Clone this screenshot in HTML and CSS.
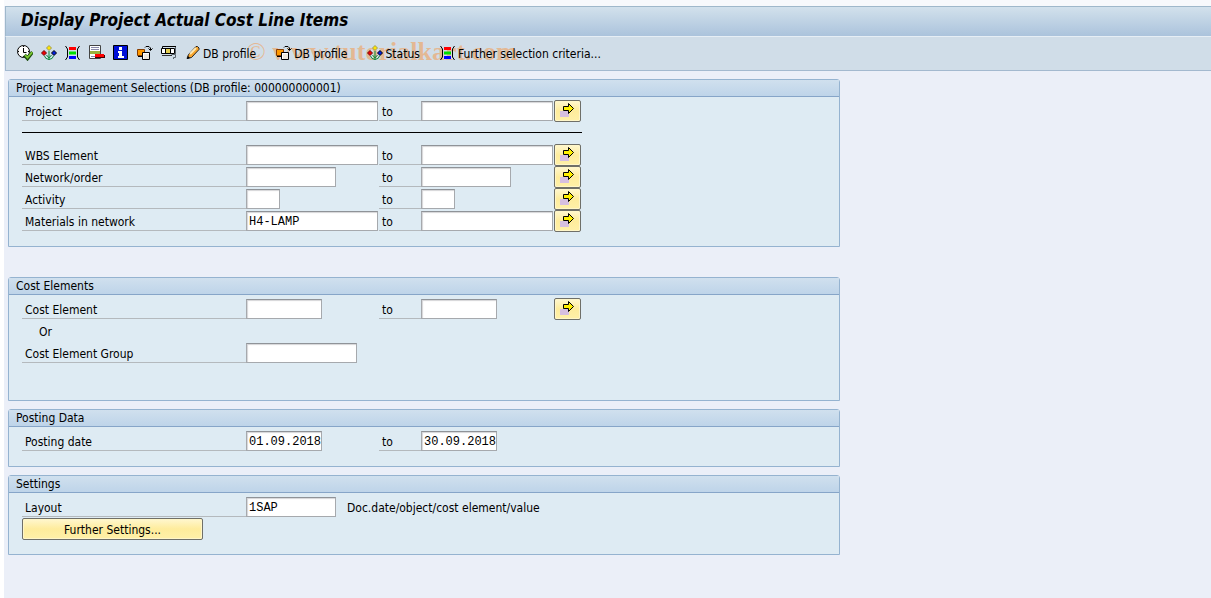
FILE: index.html
```html
<!DOCTYPE html>
<html lang="en">
<head>
    <meta charset="UTF-8">
    <meta name="viewport" content="width=device-width, initial-scale=1.0">
    <title>Display Project Actual Cost Line Items</title>
    <link rel="stylesheet" href="styles.css">
</head>
<body>

    <!-- Icon Set -->
    <svg class="icon-set" aria-hidden="true">
        <symbol id="icon-execute" viewBox="0 0 16 16">
            <circle cx="6.500" cy="6.500" r="6" fill="#fff" stroke="#000"/>
            <path d="M6.500 3V7.500H9.500M6.500 1V2M1 6.500H2M11 6.500H12M6.500 11V12" fill="none" stroke="#000"/>
            <path d="M7.500 10L10.500 13.500L15.500 7" fill="none" stroke="#1d4d10" stroke-width="3.500"/>
            <path d="M8 10L10.500 12.700L15.200 7.200" fill="none" stroke="#7cc832" stroke-width="1.800"/>
        </symbol>
        <symbol id="icon-status" viewBox="0 0 16 16">
            <path d="M8 6V15M3.500 11Q4 14 8 14.500Q12 14 12.500 11M5.500 10L8 13L10.500 10" fill="none" stroke="#0a8a3a"/>
            <path d="M8 0.500L10.500 3L8 5.500L5.500 3Z" fill="#ffe600" stroke="#a09a50"/>
            <path d="M3 5.500L5.500 8L3 10.500L0.500 8Z" fill="#f00000" stroke="#6a0b10"/>
            <path d="M13 5.500L15.500 8L13 10.500L10.500 8Z" fill="#0020e0" stroke="#000"/>
        </symbol>
        <symbol id="icon-criteria" viewBox="0 0 16 16">
            <path d="M0.500 1L2.500 4V12L0.500 15M14.500 1L12.500 4V12L14.500 15" fill="none" stroke="#000"/>
            <path d="M4 2H11V5H4Z" fill="#f00"/>
            <path d="M4 6.500H11V9.500H4Z" fill="#0d0"/>
            <path d="M4 11H11V14H4Z" fill="#00f"/>
        </symbol>
        <symbol id="icon-remove" viewBox="0 0 16 16">
            <path d="M0.500 0.500H11.500V13.500H0.500Z" fill="#fff" stroke="#444"/>
            <path d="M2 2.500H10M2 4.500H10M2 11.500H8" stroke="#88a"/>
            <path d="M1 6H11V9H1Z" fill="#9ab23c"/>
            <path d="M6 10H16V13H6Z" fill="#400"/>
            <path d="M6 9H15V12H6Z" fill="#f00"/>
        </symbol>
        <symbol id="icon-info" viewBox="0 0 16 16">
            <path d="M0.500 0.500H14.500V14.500H0.500Z" fill="#0010d8" stroke="#000"/>
            <path d="M6 2H9V5H6ZM5 6H9V11H11V13H5V11H6V8H5Z" fill="#fff"/>
        </symbol>
        <symbol id="icon-variant" viewBox="0 0 16 16">
            <path d="M0.500 4.500H7.500V10.500H0.500Z" fill="#f90" stroke="#863c00"/>
            <path d="M1 11.500H5" stroke="#000"/>
            <path d="M5.500 7.500H12.500V14.500H5.500Z" fill="#fff" stroke="#000"/>
            <path d="M7 9H12V14H7Z" fill="#eee8dc"/>
            <path d="M8 2.500L9 1.500H12L13.500 3V5M11.500 3.500L13.500 5.500L15.500 3.500" fill="none" stroke="#000"/>
        </symbol>
        <symbol id="icon-layout" viewBox="0 0 16 16">
            <path d="M1.500 3V1.500H15" fill="none" stroke="#000"/>
            <path d="M0.500 3.500H13.500V8.500H0.500Z" fill="#fff" stroke="#000"/>
            <path d="M4.500 3V8M9.500 3V8" stroke="#000"/>
            <path d="M5 4H9V8H5Z" fill="#e4cf50"/>
            <path d="M1 10.500H11" stroke="#333"/>
            <path d="M10.500 9.500H14.500V12.500H12.500V14M14.500 2V9" fill="none" stroke="#59636b"/>
        </symbol>
        <symbol id="icon-pencil" viewBox="0 0 16 16">
            <path d="M2 13.500L3.500 9.500L11 1.500H12.500L14 3V4.500L6.500 12.500Z" fill="#f8a52d" stroke="#222"/>
            <path d="M5 9L11 3" stroke="#ffe9b0" stroke-width="2"/>
            <path d="M2 14L3 11L5 13Z" fill="#000"/>
        </symbol>
        <symbol id="icon-more" viewBox="0 0 16 16">
            <path d="M1 8H10V14H1Z" fill="#d6bfe0"/>
            <path d="M4.500 3.500H9.500V0.500L14.500 5.500L9.500 10.500V7.500H4.500Z" fill="#fff000" stroke="#000"/>
        </symbol>
    </svg>

    <!-- Header Section -->
    <header class="window-header">
        <h1 class="window-title">Display Project Actual Cost Line Items</h1>
        <div class="toolbar">
            <span class="watermark"><span class="copy">©</span> www.tutorialkart.com</span>
            <button class="tool" type="button" aria-label="Execute"><svg class="icon"><use href="#icon-execute"/></svg></button>
            <button class="tool" type="button" aria-label="Status"><svg class="icon"><use href="#icon-status"/></svg></button>
            <button class="tool" type="button" aria-label="Selection criteria"><svg class="icon"><use href="#icon-criteria"/></svg></button>
            <button class="tool" type="button" aria-label="Delete"><svg class="icon"><use href="#icon-remove"/></svg></button>
            <button class="tool" type="button" aria-label="Information"><svg class="icon"><use href="#icon-info"/></svg></button>
            <button class="tool" type="button" aria-label="Get variant"><svg class="icon"><use href="#icon-variant"/></svg></button>
            <button class="tool" type="button" aria-label="Layout"><svg class="icon"><use href="#icon-layout"/></svg></button>
            <button class="tool tool-text" type="button"><svg class="icon"><use href="#icon-pencil"/></svg>DB profile</button>
            <button class="tool tool-text" type="button"><svg class="icon"><use href="#icon-variant"/></svg>DB profile</button>
            <button class="tool tool-text" type="button"><svg class="icon"><use href="#icon-status"/></svg>Status</button>
            <button class="tool tool-text" type="button"><svg class="icon"><use href="#icon-criteria"/></svg>Further selection criteria...</button>
        </div>
    </header>

    <main class="selection">

        <!-- Project Management Section -->
        <section class="group group-project">
            <h2 class="group-title">Project Management Selections (DB profile: 000000000001)</h2>
            <div class="group-body">
                <div class="row">
                    <label class="name" for="project">Project</label>
                    <input class="field field-xl" type="text" id="project">
                    <label class="to" for="project-to">to</label>
                    <input class="field field-xl" type="text" id="project-to">
                    <button class="more" type="button" aria-label="Multiple selection"><svg class="icon"><use href="#icon-more"/></svg></button>
                </div>
                <hr class="divider">
                <div class="row">
                    <label class="name" for="wbs">WBS Element</label>
                    <input class="field field-xl" type="text" id="wbs">
                    <label class="to" for="wbs-to">to</label>
                    <input class="field field-xl" type="text" id="wbs-to">
                    <button class="more" type="button" aria-label="Multiple selection"><svg class="icon"><use href="#icon-more"/></svg></button>
                </div>
                <div class="row">
                    <label class="name" for="network">Network/order</label>
                    <input class="field field-m" type="text" id="network">
                    <label class="to" for="network-to">to</label>
                    <input class="field field-m" type="text" id="network-to">
                    <button class="more" type="button" aria-label="Multiple selection"><svg class="icon"><use href="#icon-more"/></svg></button>
                </div>
                <div class="row">
                    <label class="name" for="activity">Activity</label>
                    <input class="field field-xs" type="text" id="activity">
                    <label class="to" for="activity-to">to</label>
                    <input class="field field-xs" type="text" id="activity-to">
                    <button class="more" type="button" aria-label="Multiple selection"><svg class="icon"><use href="#icon-more"/></svg></button>
                </div>
                <div class="row">
                    <label class="name" for="materials">Materials in network</label>
                    <input class="field field-xl" type="text" id="materials" value="H4-LAMP">
                    <label class="to" for="materials-to">to</label>
                    <input class="field field-xl" type="text" id="materials-to">
                    <button class="more" type="button" aria-label="Multiple selection"><svg class="icon"><use href="#icon-more"/></svg></button>
                </div>
            </div>
        </section>

        <!-- Cost Elements Section -->
        <section class="group">
            <h2 class="group-title">Cost Elements</h2>
            <div class="group-body">
                <div class="row">
                    <label class="name" for="cost">Cost Element</label>
                    <input class="field field-s" type="text" id="cost">
                    <label class="to" for="cost-to">to</label>
                    <input class="field field-s" type="text" id="cost-to">
                    <button class="more" type="button" aria-label="Multiple selection"><svg class="icon"><use href="#icon-more"/></svg></button>
                </div>
                <div class="row">
                    <span class="or">Or</span>
                </div>
                <div class="row">
                    <label class="name" for="cost-group">Cost Element Group</label>
                    <input class="field field-l" type="text" id="cost-group">
                </div>
                <div class="row"></div>
            </div>
        </section>

        <!-- Posting Data Section -->
        <section class="group">
            <h2 class="group-title">Posting Data</h2>
            <div class="group-body">
                <div class="row">
                    <label class="name" for="posting">Posting date</label>
                    <input class="field field-s" type="text" id="posting" value="01.09.2018">
                    <label class="to" for="posting-to">to</label>
                    <input class="field field-s" type="text" id="posting-to" value="30.09.2018">
                </div>
            </div>
        </section>

        <!-- Settings Section -->
        <section class="group">
            <h2 class="group-title">Settings</h2>
            <div class="group-body">
                <div class="row row-layout">
                    <label class="name" for="layout">Layout</label>
                    <input class="field field-m" type="text" id="layout" value="1SAP">
                    <span class="hint">Doc.date/object/cost element/value</span>
                </div>
                <button class="settings-btn" type="button">Further Settings...</button>
            </div>
        </section>
    </main>
</body>
</html>
```
FILE: styles.css
```css
* {
    box-sizing: border-box;
}
body {
    font-family: "DejaVu Sans Condensed", Tahoma, "DejaVu Sans", sans-serif;
    font-size: 12px;
    line-height: 16px;
    color: #000;
    background-color: #ebeff8;
    margin: 0;
    min-height: 100vh;
    border-left: 4px solid #fff;
}
button {
    font: inherit;
    color: inherit;
    cursor: pointer;
}
.icon-set {
    display: none;
}
.icon {
    width: 16px;
    height: 16px;
    flex: none;
}

/* Header */
.window-header {
    border-top: 6px solid #f7f9fc;
    padding-left: 1px;
}
.window-title {
    margin: 0;
    height: 31px;
    padding: 3px 15px;
    font-size: 17px;
    line-height: 20px;
    font-style: italic;
    border: 1px solid #9fb8cb;
    border-right: none;
    border-bottom-color: #e6eef5;
    background: linear-gradient(#d2e1ec, #abc3dc);
}
.toolbar {
    position: relative;
    display: flex;
    align-items: center;
    height: 34px;
    padding: 0 11px;
    gap: 8px;
    background-color: #d0dde8;
    border-left: 1px solid #a3b9cf;
    border-bottom: 1px solid #a3b9cf;
}
.tool {
    position: relative;
    display: flex;
    align-items: center;
    padding: 0;
    border: none;
    background: none;
}
.tool .icon {
    margin-bottom: 2px;
}
.tool-text {
    gap: 2px;
    margin-right: 12px;
}
/* the site mark lies behind the toolbar buttons */
.watermark {
    position: absolute;
    left: 240px;
    top: 0;
    font-family: "Liberation Serif", serif;
    font-size: 26px;
    line-height: 30px;
    font-weight: bold;
    color: rgba(240, 160, 90, 0.6);
    pointer-events: none;
}
.copy {
    font-weight: normal;
}

/* Selection groups */
.selection {
    display: flex;
    flex-direction: column;
    gap: 8px;
    max-width: 836px;
    padding: 8px 0 8px 4px;
}
.group {
    border: 1px solid #95b3d0;
    border-radius: 3px 3px 0 0;
    background-color: #deebf3;
}
.group-project {
    margin-bottom: 22px;
}
.group-title {
    margin: 0;
    padding: 0 7px;
    font-size: 12px;
    line-height: 16px;
    font-weight: normal;
    border-bottom: 1px solid #86a5c8;
    background: linear-gradient(#d0e0ee, #bed4e9);
}
.group-body {
    padding: 3px 13px 14px;
}
.row {
    display: grid;
    grid-template-columns: 224px 133px 42px 133px auto;
    justify-content: start;
    align-items: center;
    height: 22px;
}
.row-layout {
    grid-template-columns: 224px 101px auto;
}
.name,
.to {
    height: 20px;
    padding-left: 3px;
    line-height: 22px;
    border-bottom: 1px solid #b4b9bd;
}
.or,
.hint {
    padding-top: 2px;
}
.or {
    padding-left: 17px;
}
.field {
    height: 20px;
    padding: 1px 0 0 2px;
    font-family: "Liberation Mono", monospace;
    font-size: 12px;
    color: #000;
    border: 1px solid #a6a9ad;
    border-top-color: #8f9398;
    border-radius: 0;
    background-color: #fff;
    box-shadow: inset 1px 1px 1px #d5d5d8;
    outline: none;
}
.field-xs {
    width: 34px;
}
.field-s {
    width: 76px;
}
.field-m {
    width: 90px;
}
.field-l {
    width: 111px;
}
.field-xl {
    width: 132px;
}
.more,
.settings-btn {
    height: 22px;
    border: 1px solid #6f6f68;
    border-radius: 2px;
    background: linear-gradient(#fff7cf, #feec9c 50%, #fff0a8);
    box-shadow: inset 0 0 0 1px #fff6c8;
}
.more {
    display: flex;
    align-items: center;
    width: 27px;
    padding: 0 4px;
}
.settings-btn {
    display: block;
    width: 181px;
    padding: 2px 0 0;
}
.divider {
    width: 560px;
    margin: 10px 0 11px;
    border: none;
    border-top: 1px solid #000;
}
```
